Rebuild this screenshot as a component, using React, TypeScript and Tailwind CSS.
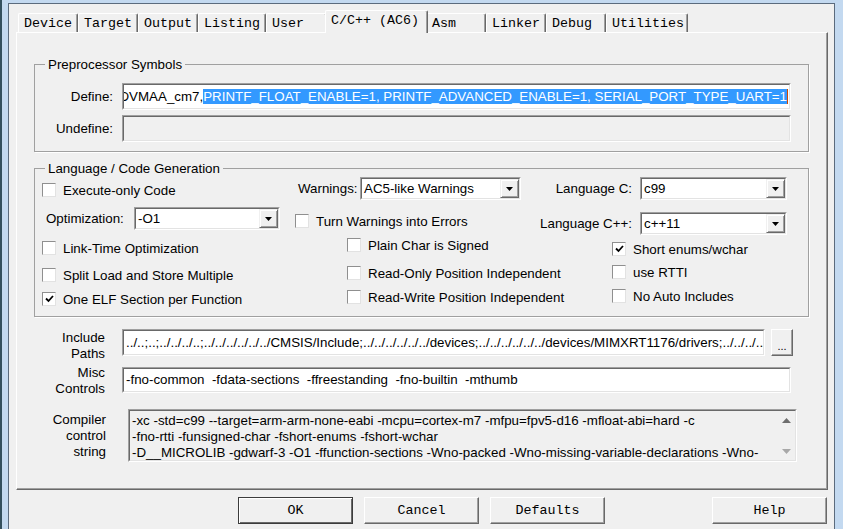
import React from "react";

const sunkenOuter = "border border-[#a0a0a0] border-r-white border-b-white";
const sunkenInner = "border border-[#696969] border-r-[#e3e3e3] border-b-[#e3e3e3]";

function Check({ checked, label, className = "" }: { checked?: boolean; label: string; className?: string }) {
  return (
    <div className={`flex items-center h-[14px] ${className}`}>
      <div className="w-[14px] h-[14px] shrink-0 border border-[#8f8f8f] border-r-[#e2e2e2] border-b-[#e2e2e2] bg-white flex items-center justify-center">
        {checked && (
          <svg width="9" height="8" viewBox="0 0 9 8">
            <path d="M1 3.5 L3.5 6 L8 1" stroke="black" strokeWidth="1.8" fill="none" />
          </svg>
        )}
      </div>
      <span className="ml-[7px] whitespace-nowrap leading-[15px]">{label}</span>
    </div>
  );
}

function Arrow() {
  return (
    <svg width="7" height="4" viewBox="0 0 7 4">
      <path d="M0 0H7L3.5 4Z" fill="black" />
    </svg>
  );
}

function Combo({ value, className = "" }: { value: string; className?: string }) {
  return (
    <div className={`${sunkenOuter} h-[23px] ${className}`}>
      <div className={`${sunkenInner} h-full bg-white flex items-center`}>
        <span className="flex-1 pl-[2px] whitespace-nowrap overflow-hidden leading-[15px]">{value}</span>
        <div className="w-[19px] h-full bg-[#f0f0f0] border border-[#f0f0f0] border-r-[#696969] border-b-[#696969] shadow-[inset_1px_1px_0_#fff,inset_-1px_-1px_0_#a0a0a0] flex items-center justify-center">
          <Arrow />
        </div>
      </div>
    </div>
  );
}

const tabs = [
  { label: "Device", cls: "w-[60px]" },
  { label: "Target", cls: "w-[60px]" },
  { label: "Output", cls: "w-[60px]" },
  { label: "Listing", cls: "w-[68px]" },
  { label: "User", cls: "w-[61px]" },
  { label: "C/C++ (AC6)", cls: "w-[103px]", active: true },
  { label: "Asm", cls: "w-[60px]" },
  { label: "Linker", cls: "w-[60px]" },
  { label: "Debug", cls: "w-[60px]" },
  { label: "Utilities", cls: "w-[82px]" },
];

export default function App() {
  return (
    <div className="w-[843px] h-[529px] bg-[#c3d9f0] border-l-2 border-l-[#34505e] pl-[6px] pt-[3px] pr-[8px] overflow-hidden font-['Liberation_Sans',Arial,sans-serif] text-[13.33px] text-black">
      <div className="h-[526px] bg-[#f0f0f0] border-l border-t border-r border-[#5b6b7d] flex flex-col">
        {/* tabs */}
        <div className="mt-[6px] ml-[9px] h-[22px] flex items-start font-['Liberation_Mono',monospace]">
          {tabs.map((t) =>
            t.active ? (
              <div
                key={t.label}
                className={`${t.cls} -mx-[2px] h-[23px] relative z-10 bg-[#f0f0f0] border-t border-l border-white border-r border-r-[#696969] shadow-[inset_-1px_0_0_#a0a0a0] rounded-t-[2px] pl-[5px] pt-[2px] leading-[15px] whitespace-nowrap`}
              >
                {t.label}
              </div>
            ) : (
              <div
                key={t.label}
                className={`${t.cls} mt-[3px] h-[19px] border-t border-l border-white border-r border-r-[#696969] shadow-[inset_-1px_0_0_#a0a0a0] rounded-t-[2px] pl-[5px] leading-[19px] whitespace-nowrap`}
              >
                {t.label}
              </div>
            )
          )}
        </div>

        {/* panel */}
        <div className="ml-[7px] w-[812px] h-[458px] border-t border-l border-white border-r border-b border-r-[#696969] border-b-[#696969] shadow-[inset_-1px_-1px_0_#a0a0a0] flex flex-col">
          {/* Preprocessor Symbols */}
          <fieldset className="ml-[17px] mt-[24px] w-[775px] border border-[#a0a0a0] shadow-[1px_1px_0_#fff] pb-[9px]">
            <legend className="ml-[10px] px-[3px] leading-[15px]">Preprocessor Symbols</legend>
            <div className="mt-[11px] flex items-center">
              <div className="w-[78px] text-right">Define:</div>
              <div className={`${sunkenOuter} ml-[9px] w-[669px] h-[27px]`}>
                <div className={`${sunkenInner} h-full bg-white flex items-center justify-end overflow-hidden pr-[1px] whitespace-nowrap`}>
                  <span className="leading-[15px] shrink-0">CPU_MIMXRT1176DVMAA_cm7,</span>
                  <span className="leading-[15px] shrink-0 bg-[#3399ff] text-white">
                    {" PRINTF_FLOAT_ENABLE=1, PRINTF_ADVANCED_ENABLE=1, SERIAL_PORT_TYPE_UART=1"}
                  </span>
                  <span className="w-[1px] h-[15px] bg-[#d04a00] shrink-0" />
                </div>
              </div>
            </div>
            <div className="mt-[5px] flex items-center">
              <div className="w-[78px] text-right">Undefine:</div>
              <div className={`${sunkenOuter} ml-[9px] w-[669px] h-[27px]`}>
                <div className={`${sunkenInner} h-full bg-[#f0f0f0]`} />
              </div>
            </div>
          </fieldset>

          {/* Language / Code Generation */}
          <fieldset className="ml-[17px] mt-[9px] w-[775px] border border-[#a0a0a0] shadow-[1px_1px_0_#fff] pb-[10px]">
            <legend className="ml-[10px] px-[3px] leading-[15px]">Language / Code Generation</legend>
            <div className="flex">
              {/* left column */}
              <div className="ml-[7px] w-[253px] flex flex-col">
                <Check className="mt-[7px]" label="Execute-only Code" />
                <div className="mt-[10px] h-[23px] flex items-center">
                  <div className="pl-[4px] w-[92px]">Optimization:</div>
                  <Combo value="-O1" className="w-[146px]" />
                </div>
                <Check className="mt-[11px]" label="Link-Time Optimization" />
                <Check className="mt-[13px]" label="Split Load and Store Multiple" />
                <Check className="mt-[10px]" checked label="One ELF Section per Function" />
              </div>
              {/* middle column */}
              <div className="w-[247px] flex flex-col">
                <div className="mt-[1px] h-[23px] flex items-center">
                  <div className="ml-[3px] w-[62px]">Warnings:</div>
                  <Combo value="AC5-like Warnings" className="w-[161px]" />
                </div>
                <Check className="mt-[14px]" label="Turn Warnings into Errors" />
                <Check className="mt-[10px] ml-[52px]" label="Plain Char is Signed" />
                <Check className="mt-[14px] ml-[52px]" label="Read-Only Position Independent" />
                <Check className="mt-[10px] ml-[52px]" label="Read-Write Position Independent" />
              </div>
              {/* right column */}
              <div className="flex flex-col">
                <div className="mt-[1px] h-[23px] flex items-center">
                  <div className="w-[90px] flex justify-end whitespace-nowrap">Language C:</div>
                  <Combo value="c99" className="ml-[8px] w-[147px]" />
                </div>
                <div className="mt-[12px] h-[23px] flex items-center">
                  <div className="w-[90px] flex justify-end whitespace-nowrap">Language C++:</div>
                  <Combo value="c++11" className="ml-[8px] w-[147px]" />
                </div>
                <Check className="mt-[7px] ml-[70px]" checked label="Short enums/wchar" />
                <Check className="mt-[9px] ml-[70px]" label="use RTTI" />
                <Check className="mt-[10px] ml-[70px]" label="No Auto Includes" />
              </div>
            </div>
          </fieldset>

          {/* Include Paths */}
          <div className="mt-[12px] h-[27px] flex items-center">
            <div className="w-[88px] shrink-0 text-right leading-[16px] mt-[6px]">
              Include
              <br />
              Paths
            </div>
            <div className={`${sunkenOuter} ml-[17px] w-[643px] h-[27px]`}>
              <div className={`${sunkenInner} h-full bg-white flex items-center overflow-hidden whitespace-nowrap pl-[2px]`}>
                ../..;..;../../../..;../../../../../../CMSIS/Include;../../../../../../devices;../../../../../../devices/MIMXRT1176/drivers;../../../../../../devices/MIMXRT1176/utilities
              </div>
            </div>
            <div className="ml-[6px] w-[22px] h-[27px] border border-white border-r-[#696969] border-b-[#696969] shadow-[inset_-1px_-1px_0_#a0a0a0] flex items-end justify-center pb-[4px] leading-[10px] text-[11px]">
              ...
            </div>
          </div>

          {/* Misc Controls */}
          <div className="mt-[11px] h-[26px] flex items-center">
            <div className="w-[88px] shrink-0 text-right leading-[16px] mt-[2px]">
              Misc
              <br />
              Controls
            </div>
            <div className={`${sunkenOuter} ml-[17px] w-[669px] h-[26px]`}>
              <div className={`${sunkenInner} h-full bg-white flex items-center overflow-hidden whitespace-pre pl-[2px]`}>
                {"-fno-common  -fdata-sections  -ffreestanding  -fno-builtin  -mthumb"}
              </div>
            </div>
          </div>

          {/* Compiler control string */}
          <div className="mt-[16px] h-[53px] flex items-center">
            <div className="w-[89px] shrink-0 text-right leading-[16px]">
              Compiler
              <br />
              control
              <br />
              string
            </div>
            <div className={`${sunkenOuter} ml-[22px] w-[669px] h-[53px]`}>
              <div className={`${sunkenInner} h-full bg-[#f0f0f0] flex`}>
                <div className="flex-1 pl-[2px] pt-[2px] leading-[16px] overflow-hidden whitespace-nowrap">
                  <div>-xc -std=c99 --target=arm-arm-none-eabi -mcpu=cortex-m7 -mfpu=fpv5-d16 -mfloat-abi=hard -c</div>
                  <div>-fno-rtti -funsigned-char -fshort-enums -fshort-wchar</div>
                  <div>-D__MICROLIB -gdwarf-3 -O1 -ffunction-sections -Wno-packed -Wno-missing-variable-declarations -Wno-</div>
                </div>
                <div className="w-[18px] flex flex-col items-center justify-between pt-[7px] pb-[6px]">
                  <svg width="9" height="5" viewBox="0 0 9 5">
                    <path d="M0 5H9L4.5 0Z" fill="#6e6e6e" />
                  </svg>
                  <svg width="9" height="5" viewBox="0 0 9 5">
                    <path d="M0 0H9L4.5 5Z" fill="#a8a8a8" />
                  </svg>
                </div>
              </div>
            </div>
          </div>
        </div>

        {/* buttons */}
        <div className="mt-[7px] ml-[229px] flex font-['Liberation_Mono',monospace]">
          <div className="w-[115px] h-[27px] border border-[#3c3c3c] shadow-[inset_1px_1px_0_#fff,inset_-1px_-1px_0_#696969] flex items-center justify-center">
            OK
          </div>
          <div className="ml-[11px] w-[115px] h-[27px] border border-white border-r-[#696969] border-b-[#696969] shadow-[inset_-1px_-1px_0_#a0a0a0] flex items-center justify-center">
            Cancel
          </div>
          <div className="ml-[11px] w-[115px] h-[27px] border border-white border-r-[#696969] border-b-[#696969] shadow-[inset_-1px_-1px_0_#a0a0a0] flex items-center justify-center">
            Defaults
          </div>
          <div className="ml-[107px] w-[115px] h-[27px] border border-white border-r-[#696969] border-b-[#696969] shadow-[inset_-1px_-1px_0_#a0a0a0] flex items-center justify-center">
            Help
          </div>
        </div>
      </div>
    </div>
  );
}
